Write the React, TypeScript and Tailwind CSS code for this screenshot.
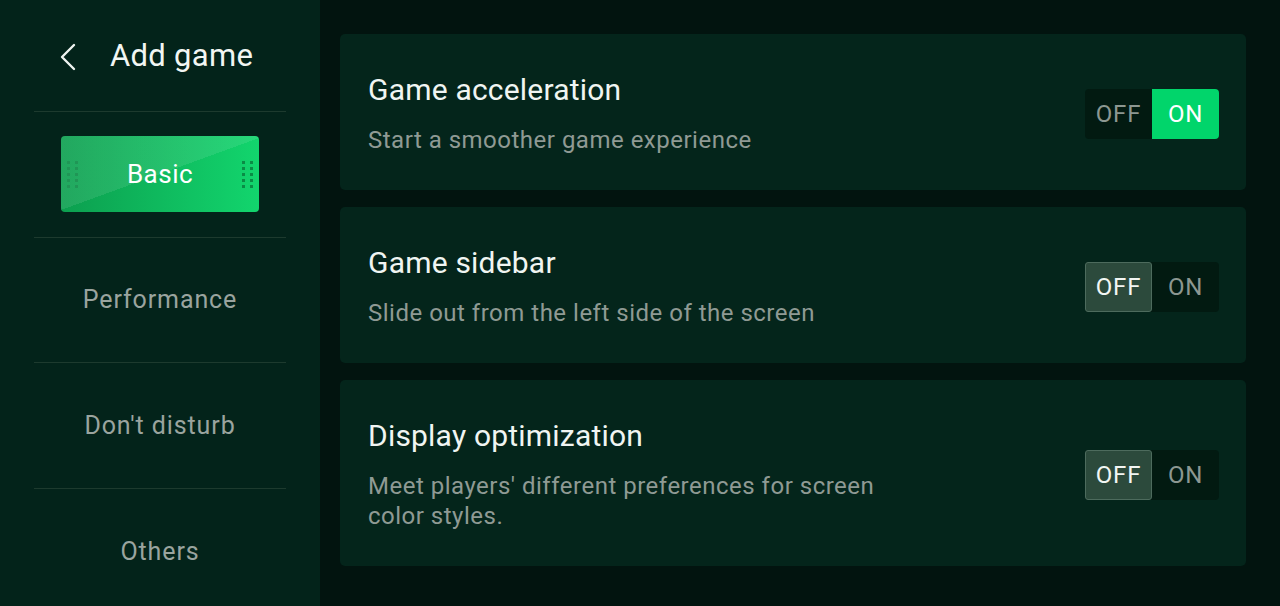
const navItems = ['Basic', 'Performance', "Don't disturb", 'Others']

const settings = [
  { title: 'Game acceleration', desc: 'Start a smoother game experience', on: true },
  { title: 'Game sidebar', desc: 'Slide out from the left side of the screen', on: false },
  { title: 'Display optimization', desc: "Meet players' different preferences for screen color styles.", on: false },
]

function Dots() {
  return (
    <div className="grid grid-cols-2 gap-x-[5px] gap-y-[3px]">
      {Array.from({ length: 10 }).map((_, i) => (
        <span key={i} className="block h-[3px] w-[3px] bg-[#0a8c45]" />
      ))}
    </div>
  )
}

function Toggle({ on }: { on: boolean }) {
  return (
    <div className="flex h-[50px] w-[134px] shrink-0 rounded-[4px] bg-[#021a11] text-[24px] leading-none tracking-[0.8px]">
      <div
        className={
          on
            ? 'flex w-[67px] items-center justify-center text-[#8c9791]'
            : 'flex w-[67px] items-center justify-center rounded-[3px] border border-[#4d6b5d] bg-[#2c4a3c] text-[#f2f6f3]'
        }
      >
        OFF
      </div>
      <div
        className={
          on
            ? 'flex w-[67px] items-center justify-center rounded-r-[4px] bg-[#01d56b] text-white'
            : 'flex w-[67px] items-center justify-center text-[#8c9791]'
        }
      >
        ON
      </div>
    </div>
  )
}

export default function App() {
  return (
    <div className="flex h-[606px] w-[1280px] overflow-hidden bg-[#02140f] font-['Roboto',sans-serif]">
      <aside className="flex w-[320px] shrink-0 flex-col overflow-hidden bg-[#03231a] px-[34px]">
        <div className="flex h-[112px] shrink-0 items-center border-b border-[#1d3a2e] pl-[26px] pt-[2px]">
          <svg width="16" height="28" viewBox="0 0 16 28" fill="none" className="shrink-0">
            <polyline points="14,2 2,14 14,26" stroke="#eef3f0" strokeWidth="2.4" strokeLinecap="round" strokeLinejoin="round" />
          </svg>
          <span className="ml-[34px] text-[31px] tracking-[0.3px] text-[#f2f6f3]">Add game</span>
        </div>
        {navItems.map((item, i) => (
          <div
            key={item}
            className={
              i < navItems.length - 1
                ? 'flex h-[125.5px] shrink-0 items-center justify-center border-b border-[#1d3a2e]'
                : 'flex h-[125.5px] shrink-0 items-center justify-center'
            }
          >
            {i === 0 ? (
              <div className="relative flex h-[76px] w-[198px] items-center justify-between overflow-hidden rounded-[4px] bg-gradient-to-r from-[#0c9f4f] to-[#12d56d] px-[6px]">
                <div className="absolute inset-0 bg-[linear-gradient(160deg,rgba(255,255,255,0.09)_0%,rgba(255,255,255,0.09)_50%,rgba(255,255,255,0)_50%)]" />
                <Dots />
                <span className="relative text-[26px] tracking-[0.5px] text-white">Basic</span>
                <Dots />
              </div>
            ) : (
              <span className="text-[25px] tracking-[0.9px] text-[#9aa49f]">{item}</span>
            )}
          </div>
        ))}
      </aside>

      <main className="flex flex-1 flex-col gap-[17px] px-[20px] pt-[34px]">
        {settings.map((s) => (
          <div
            key={s.title}
            className="flex w-[906px] items-center justify-between rounded-[5px] bg-[#04251b] pb-[35px] pl-[28px] pr-[27px] pt-[38px]"
          >
            <div className="flex flex-col">
              <span className="text-[30px] leading-[36px] tracking-[0.2px] text-[#f0f5f2]">{s.title}</span>
              <span className="mt-[17px] max-w-[530px] text-[24px] leading-[30px] tracking-[0.5px] text-[#8f9a94]">
                {s.desc}
              </span>
            </div>
            <Toggle on={s.on} />
          </div>
        ))}
      </main>
    </div>
  )
}
